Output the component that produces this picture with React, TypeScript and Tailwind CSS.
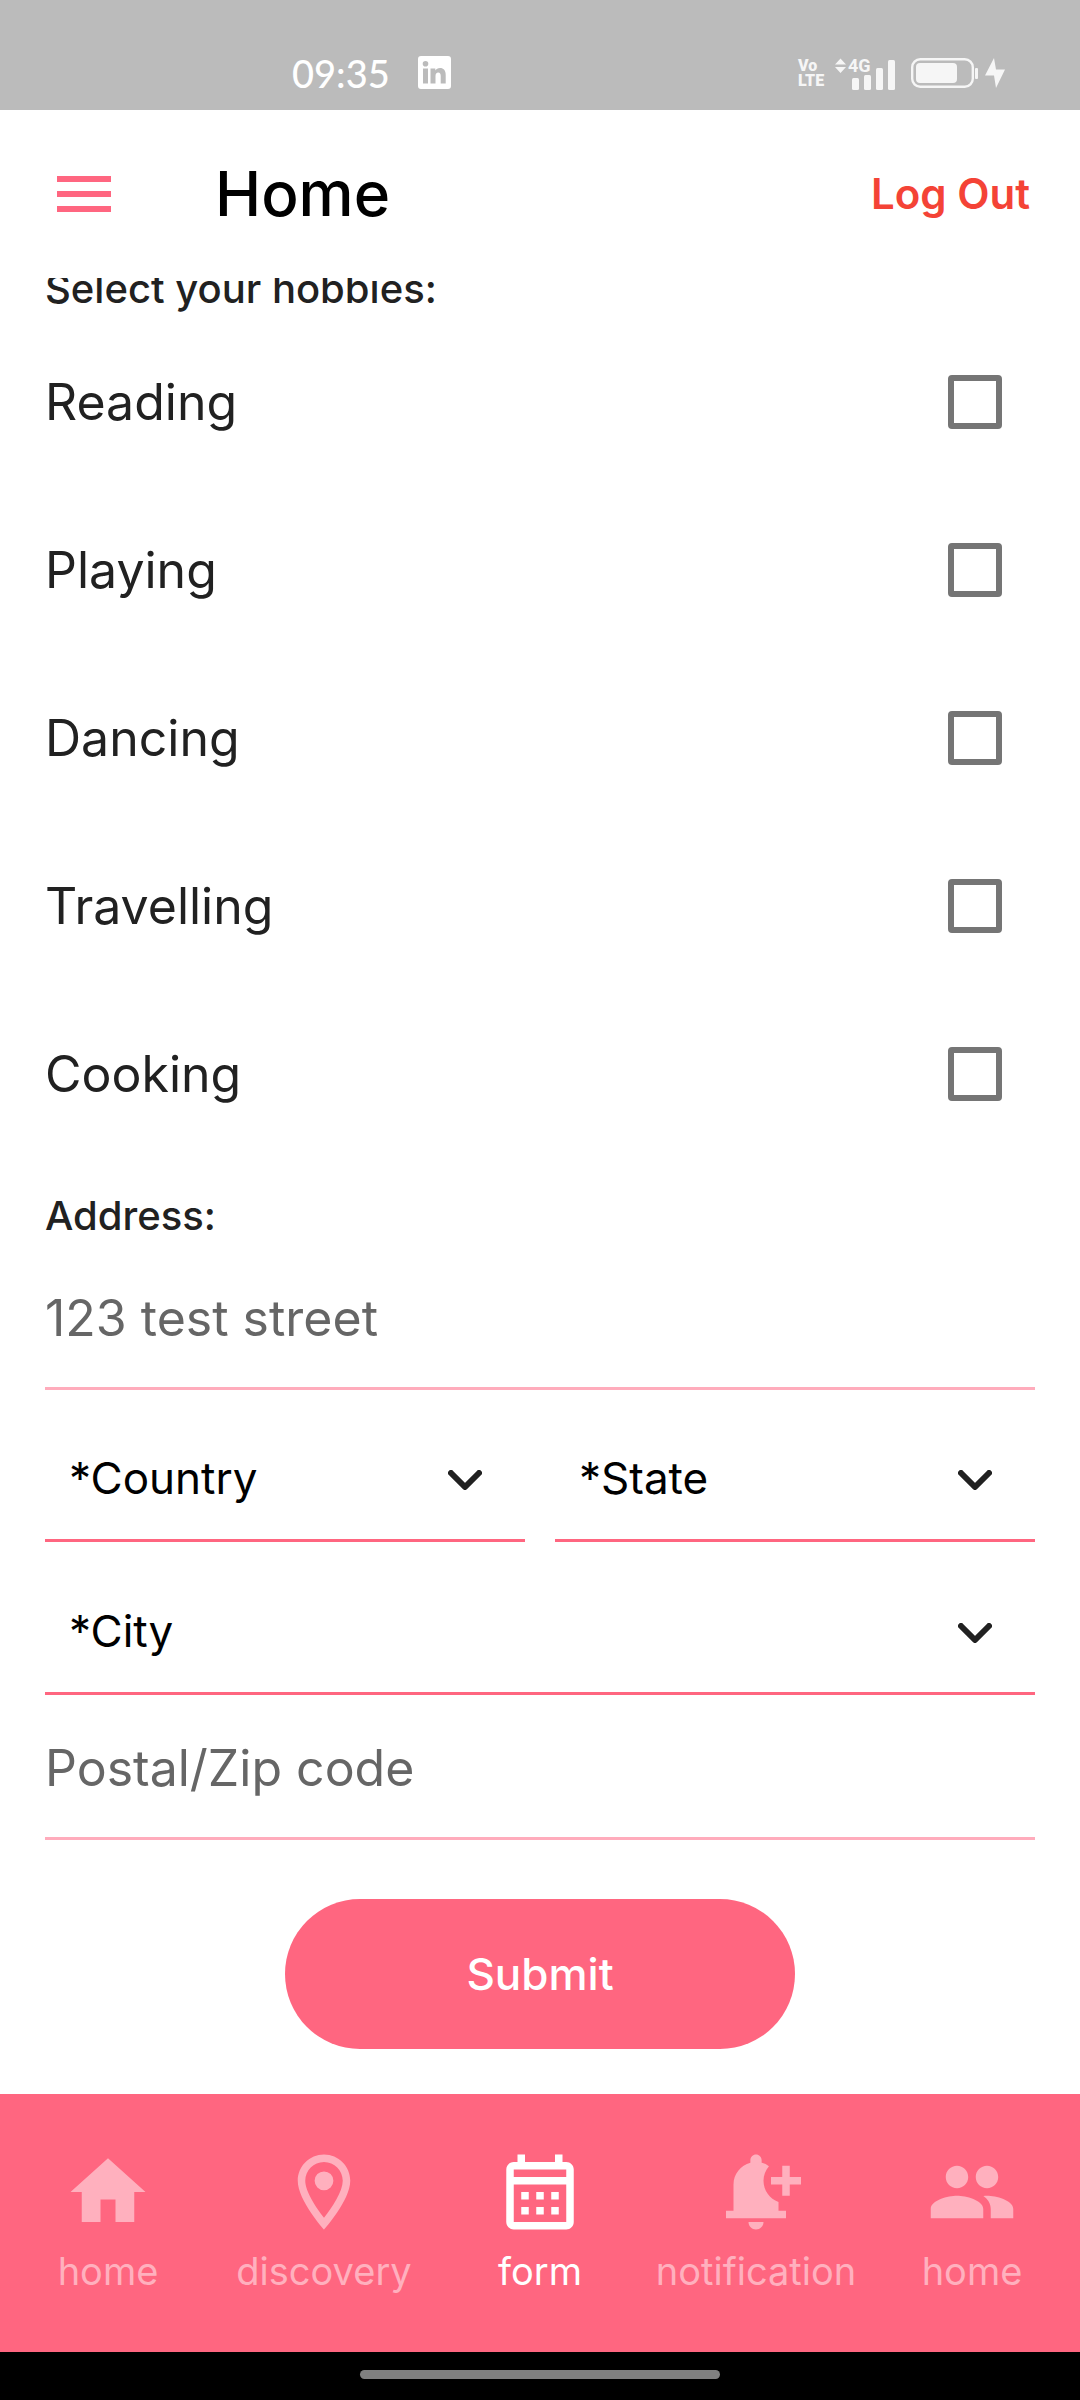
import React from "react";

const HOBBIES = ["Reading", "Playing", "Dancing", "Travelling", "Cooking"];

const ICONS = {
  home: "M10 20v-6h4v6h5v-8h3L12 3 2 12h3v8z",
  place:
    "M12 2C8.13 2 5 5.13 5 9c0 5.25 7 13 7 13s7-7.75 7-13c0-3.87-3.13-7-7-7zM7 9c0-2.76 2.24-5 5-5s5 2.24 5 5c0 2.88-2.88 7.19-5 9.88C9.92 16.21 7 11.85 7 9zM12 6.5a2.5 2.5 0 1 1 0 5 2.5 2.5 0 0 1 0-5z",
  calendar:
    "M19 4h-1V2h-2v2H8V2H6v2H5c-1.11 0-1.99.9-1.99 2L3 20c0 1.1.89 2 2 2h14c1.1 0 2-.9 2-2V6c0-1.1-.9-2-2-2zm0 16H5V10h14v10zm0-12H5V6h14v2zM9 14H7v-2h2v2zm4 0h-2v-2h2v2zm4 0h-2v-2h2v2zm-8 4H7v-2h2v2zm4 0h-2v-2h2v2zm4 0h-2v-2h2v2z",
  bell:
    "M10 20h4c0 1.1-.9 2-2 2s-2-.9-2-2zm4-11c0 2.61 1.67 4.83 4 5.66V17h2v2H4v-2h2v-7c0-2.79 1.91-5.14 4.5-5.8v-.7C10.5 2.67 11.17 2 12 2s1.5.67 1.5 1.5v.7c.71.18 1.36.49 1.95.9C14.54 6.14 14 7.51 14 9zm10-1h-3V5h-2v3h-3v2h3v3h2v-3h3V8z",
  people:
    "M16 11c1.66 0 2.99-1.34 2.99-3S17.66 5 16 5c-1.66 0-3 1.34-3 3s1.34 3 3 3zm-8 0c1.66 0 2.99-1.34 2.99-3S9.66 5 8 5C6.34 5 5 6.34 5 8s1.34 3 3 3zm0 2c-2.33 0-7 1.17-7 3.5V19h14v-2.5c0-2.33-4.67-3.5-7-3.5zm8 0c-.29 0-.62.02-.97.05 1.16.84 1.97 1.97 1.97 3.45V19h6v-2.5c0-2.33-4.67-3.5-7-3.5z",
};

const TABS = [
  { label: "home", icon: ICONS.home, active: false },
  { label: "discovery", icon: ICONS.place, active: false },
  { label: "form", icon: ICONS.calendar, active: true },
  { label: "notification", icon: ICONS.bell, active: false },
  { label: "home", icon: ICONS.people, active: false },
];

function StatusBar() {
  return (
    <div className="flex h-[110px] items-center justify-between bg-[#bbbbbb] pt-[35px] pr-[75px] pl-[292px] text-white">
      <div className="flex items-center gap-[28px]">
        <span className="font-['Lato',sans-serif] text-[38px] leading-[36px] font-medium">09:35</span>
        <svg className="h-[33px] w-[33px]" viewBox="0 0 33 33" aria-label="LinkedIn">
          <path
            fill="currentColor"
            fillRule="evenodd"
            d="M3 0h27a3 3 0 0 1 3 3v27a3 3 0 0 1-3 3H3a3 3 0 0 1-3-3V3a3 3 0 0 1 3-3zM5 12.500v15h5v-15zM7.500 5a2.800 2.800 0 1 0 0 5.600 2.800 2.800 0 0 0 0-5.600zM12.500 12.500v15h5v-7.500c0-2.200.9-3.600 2.700-3.600s2.500 1.400 2.500 3.600v7.500h5v-8.500c0-4.400-2.100-6.900-5.700-6.900-2.200 0-3.700 1-4.700 2.500v-2.100z"
          />
        </svg>
      </div>
      <div className="flex items-center text-[#f6f6f6]">
        <div className="flex w-[24px] flex-col font-['Roboto',sans-serif] text-[16px] leading-[15px] font-black">
          <span>Vo</span>
          <span>LTE</span>
        </div>
        <svg className="ml-[13px] h-[36px] w-[60px]" viewBox="0 -3 60 36" fill="currentColor" aria-label="4G signal">
          <path d="M5.500 0.500 11 6.500H0zM0 9h11l-5.500 6z" />
          <text x="13" y="14" fontSize="18" fontWeight="700" fontFamily="Roboto, sans-serif">
            4G
          </text>
          <rect x="17" y="20" width="7" height="12" rx="1.500" />
          <rect x="29" y="17" width="7" height="15" rx="1.500" />
          <rect x="41" y="10" width="7" height="22" rx="1.500" />
          <rect x="53" y="2" width="7" height="30" rx="1.500" />
        </svg>
        <svg className="ml-[16px] h-[30px] w-[94px]" viewBox="0 0 94 30" fill="currentColor" aria-label="Battery charging">
          <rect x="1.200" y="1.200" width="60.600" height="27.600" rx="8" fill="none" stroke="currentColor" strokeWidth="2.400" />
          <rect x="5" y="5" width="41" height="20" rx="4" />
          <rect x="64" y="10" width="3" height="11" rx="1" />
          <path d="M83 0 74 17.500h9L85 30l9-18.500h-9z" />
        </svg>
      </div>
    </div>
  );
}

function Header() {
  return (
    <header className="flex h-[168px] items-center bg-white pr-[50px] pl-[57px]">
      <button type="button" aria-label="Open menu" className="flex w-[54px] flex-col gap-[9px]">
        <span className="h-[6px] w-full bg-[#ff6680]" />
        <span className="h-[6px] w-full bg-[#ff6680]" />
        <span className="h-[6px] w-full bg-[#ff6680]" />
      </button>
      <h1 className="ml-[104px] text-[62px] leading-[72px] font-medium text-black">Home</h1>
      <button type="button" className="ml-auto text-[42px] leading-[54px] font-semibold text-[#f44336]">
        Log Out
      </button>
    </header>
  );
}

function HobbyRow({ name }: { name: string }) {
  return (
    <label className="flex h-[168px] items-center justify-between pr-[33px]">
      <span className="text-[50px] leading-[60px]">{name}</span>
      <input
        type="checkbox"
        className="h-[54px] w-[54px] appearance-none rounded-[4px] border-[6px] border-[#757575] bg-white checked:bg-[#ff6680]"
      />
    </label>
  );
}

function LineInput({ label, placeholder }: { label: string; placeholder: string }) {
  return (
    <input
      type="text"
      aria-label={label}
      placeholder={placeholder}
      className="block h-[141px] w-full border-b-[3px] border-[#ffacbc] bg-transparent text-[50px] placeholder:text-[#666666] placeholder:opacity-100"
    />
  );
}

function LineSelect({ label }: { label: string }) {
  return (
    <div className="relative min-w-0 flex-1">
      <select
        aria-label={label}
        className="block h-[126px] w-full appearance-none border-b-[3px] border-[#ff6680] bg-transparent pr-[90px] pl-[24px] text-[44px] text-black"
      >
        <option>*{label}</option>
      </select>
      <svg
        className="pointer-events-none absolute top-[54px] right-[43px] h-[20px] w-[34px]"
        viewBox="0 0 34 20"
        fill="none"
        stroke="#212121"
        strokeWidth="6"
        strokeLinecap="round"
        strokeLinejoin="round"
        aria-hidden="true"
      >
        <path d="M3 3l14 14L31 3" />
      </svg>
    </div>
  );
}

function TabBar() {
  return (
    <nav className="grid h-[258px] grid-cols-5 bg-[#ff6680] pt-[53px]">
      {TABS.map((tab, i) => (
        <a
          key={i}
          href="#"
          aria-current={tab.active ? "page" : undefined}
          className={
            tab.active
              ? "flex flex-col items-center gap-[10px] text-white"
              : "flex flex-col items-center gap-[10px] text-[#ffb0be]"
          }
        >
          <svg className="h-[90px] w-[90px]" viewBox="0 0 24 24" fill="currentColor" fillRule="evenodd" aria-hidden="true">
            <path d={tab.icon} />
          </svg>
          <span className="text-[38px] leading-[48px]">{tab.label}</span>
        </a>
      ))}
    </nav>
  );
}

export default function App() {
  return (
    <div className="flex min-h-screen flex-col bg-white font-['Inter',sans-serif] text-[#212121]">
      <StatusBar />
      <Header />
      <main className="flex-1 overflow-hidden px-[45px]">
        <form>
          <div role="group" aria-labelledby="hobbies">
            <h2 id="hobbies" className="-mt-[10px] mb-[8px] text-[40px] leading-[42px] font-medium">
              Select your hobbies:
            </h2>
            {HOBBIES.map((name) => (
              <HobbyRow key={name} name={name} />
            ))}
          </div>
          <h2 className="mt-[37px] mb-[12px] text-[40px] leading-[42px] font-medium">Address:</h2>
          <LineInput label="Street address" placeholder="123 test street" />
          <div className="mt-[26px] flex gap-[30px]">
            <LineSelect label="Country" />
            <LineSelect label="State" />
          </div>
          <div className="mt-[27px] flex">
            <LineSelect label="City" />
          </div>
          <div className="mt-[4px]">
            <LineInput label="Postal code" placeholder="Postal/Zip code" />
          </div>
          <button
            type="button"
            className="mx-auto mt-[59px] mb-[45px] block h-[150px] w-[510px] rounded-full bg-[#ff6680] text-[44px] font-medium text-white"
          >
            Submit
          </button>
        </form>
      </main>
      <TabBar />
      <div className="flex h-[48px] items-start justify-center bg-black pt-[18px]">
        <div className="h-[9px] w-1/3 rounded-full bg-[#808080]" />
      </div>
    </div>
  );
}
